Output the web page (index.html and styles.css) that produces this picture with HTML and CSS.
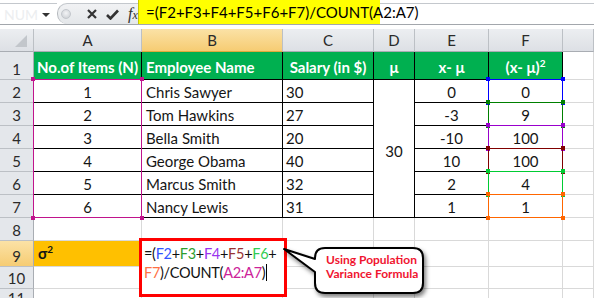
FILE: index.html
```html
<!DOCTYPE html>
<html>
<head>
<meta charset="utf-8">
<link rel="stylesheet" href="styles.css">
</head>
<body>
<div class="app">
  <div class="fbar">
    <div class="namebox"><span class="nb-text">NUM</span><span class="nb-arrow"></span></div>
    <div class="ctrls">
      <span class="knob"></span>
      <svg class="ic-x" width="10" height="10" viewBox="0 0 10 10"><path d="M1 1 L9 9 M9 1 L1 9" stroke="#333" stroke-width="2.2"/></svg>
      <svg class="ic-ok" width="13" height="11" viewBox="0 0 13 11"><path d="M1 6 L4.5 9.5 L12 1.5" fill="none" stroke="#333" stroke-width="2.6"/></svg>
      <span class="fx">f<span class="fx-x">x</span></span>
    </div>
    <div class="formula"><span class="hl">=(F2+F3+F4+F5+F6+F7)/COUNT(A2:A7)</span></div>
  </div>
  <div class="gap"></div>
  <div class="sheet">
    <!-- header row -->
    <div class="ch corner"><span class="tri"></span></div>
    <div class="ch">A</div>
    <div class="ch act">B</div>
    <div class="ch">C</div>
    <div class="ch">D</div>
    <div class="ch">E</div>
    <div class="ch">F</div>
    <div class="ch"></div>

    <!-- row 1 -->
    <div class="rh">1</div>
    <div class="t hd c">No.of Items (N)</div>
    <div class="t hd l">Employee Name</div>
    <div class="t hd c">Salary (in $)</div>
    <div class="t hd c">μ</div>
    <div class="t hd c">x- μ</div>
    <div class="t hd c"><span>(x- μ)<sup>2</sup></span></div>
    <div class="e"></div>

    <!-- row 2 -->
    <div class="rh">2</div>
    <div class="t c">1</div>
    <div class="t l">Chris Sawyer</div>
    <div class="t l2">30</div>
    <div class="t c mid merged">30</div>
    <div class="t c">0</div>
    <div class="t c">0</div>
    <div class="e"></div>

    <!-- row 3 -->
    <div class="rh">3</div>
    <div class="t c">2</div>
    <div class="t l">Tom Hawkins</div>
    <div class="t l2">27</div>
    <div class="t c">-3</div>
    <div class="t c">9</div>
    <div class="e"></div>

    <!-- row 4 -->
    <div class="rh">4</div>
    <div class="t c">3</div>
    <div class="t l">Bella Smith</div>
    <div class="t l2">20</div>
    <div class="t c">-10</div>
    <div class="t c">100</div>
    <div class="e"></div>

    <!-- row 5 -->
    <div class="rh">5</div>
    <div class="t c">4</div>
    <div class="t l">George Obama</div>
    <div class="t l2">40</div>
    <div class="t c">10</div>
    <div class="t c">100</div>
    <div class="e"></div>

    <!-- row 6 -->
    <div class="rh">6</div>
    <div class="t c">5</div>
    <div class="t l">Marcus Smith</div>
    <div class="t l2">32</div>
    <div class="t c">2</div>
    <div class="t c">4</div>
    <div class="e"></div>

    <!-- row 7 -->
    <div class="rh">7</div>
    <div class="t c">6</div>
    <div class="t l">Nancy Lewis</div>
    <div class="t l2">31</div>
    <div class="t c">1</div>
    <div class="t c">1</div>
    <div class="e"></div>

    <!-- row 8 -->
    <div class="rh">8</div>
    <div class="e"></div><div class="e"></div><div class="e"></div><div class="e"></div><div class="e"></div><div class="e"></div><div class="e"></div>

    <!-- row 9 -->
    <div class="rh act">9</div>
    <div class="e sig"><span>σ<sup>2</sup></span></div>
    <div class="e"></div><div class="e"></div><div class="e"></div><div class="e"></div><div class="e"></div><div class="e"></div>

    <!-- row 10 -->
    <div class="rh">10</div>
    <div class="e"></div><div class="e"></div><div class="e"></div><div class="e"></div><div class="e"></div><div class="e"></div><div class="e"></div>

    <!-- row 11 -->
    <div class="rh rh-last">11</div>
    <div class="e"></div><div class="e"></div><div class="e"></div><div class="e"></div><div class="e"></div><div class="e"></div><div class="e"></div>
  </div>

  <!-- range highlights -->
  <div class="rng rng-a"><i class="sq tl"></i><i class="sq tr"></i><i class="sq bl"></i><i class="sq br"></i></div>
  <div class="rng f f2"><i class="sq tl"></i><i class="sq tr"></i><i class="sq bl"></i><i class="sq br"></i></div>
  <div class="rng f f3"><i class="sq tl"></i><i class="sq tr"></i><i class="sq bl"></i><i class="sq br"></i></div>
  <div class="rng f f4"><i class="sq tl"></i><i class="sq tr"></i><i class="sq bl"></i><i class="sq br"></i></div>
  <div class="rng f f5"><i class="sq tl"></i><i class="sq tr"></i><i class="sq bl"></i><i class="sq br"></i></div>
  <div class="rng f f6"><i class="sq tl"></i><i class="sq tr"></i><i class="sq bl"></i><i class="sq br"></i></div>
  <div class="rng f f7"><i class="sq tl"></i><i class="sq tr"></i><i class="sq bl"></i><i class="sq br"></i></div>

  <!-- in-cell edit box -->
  <div class="edit">
    <div class="ln">=(<span class="k2">F2</span>+<span class="k3">F3</span>+<span class="k4">F4</span>+<span class="k5">F5</span>+<span class="k6">F6</span>+</div>
    <div class="ln"><span class="k7">F7</span>)/COUNT(<span class="ka">A2:A7</span>)<span class="caret"></span></div>
  </div>

  <!-- callout -->
  <svg class="callout" width="150" height="56" viewBox="0 0 150 56">
    <path d="M45 4 H133 Q143 4 143 14 V39 Q143 49 133 49 H45 Q35 49 35 39 V28 L4 5 L35 15 V14 Q35 4 45 4 Z" fill="#fff" stroke="#000" stroke-width="2" stroke-linejoin="round"/>
  </svg>
  <div class="callout-text">Using Population<br>Variance Formula</div>
</div>
</body>
</html>
```

FILE: styles.css
```css
* { box-sizing: border-box; margin: 0; padding: 0; }
body {
  margin: 0;
  background: #fff;
  font-family: Lato, "Liberation Sans", sans-serif;
  font-size: 15px;
  color: #151515;
}
.app {
  position: relative;
  width: 594px;
  height: 298px;
  overflow: hidden;
}

/* formula bar */
.fbar {
  display: flex;
  height: 25px;
  border-bottom: 1px solid #a3a7ac;
}
.namebox {
  position: relative;
  width: 57px;
  margin-top: 3px;
  border-top: 1px solid #c4c8cd;
  display: flex;
  align-items: center;
  padding-left: 4px;
  font-size: 14px;
  color: #eceef0;
}
.nb-arrow {
  position: absolute;
  left: 42px;
  top: 9px;
  border-left: 4px solid transparent;
  border-right: 4px solid transparent;
  border-top: 4px solid #333;
}
.ctrls {
  width: 81px;
  margin-top: 3px;
  border-top: 1px solid #c4c8cd;
  border-left: 1px solid #b5b9be;
  border-radius: 10px 0 0 10px;
  background: linear-gradient(#f1f2f4, #e4e7ea);
  display: flex;
  align-items: center;
  padding-left: 3px;
}
.knob {
  width: 10px;
  height: 10px;
  border-radius: 50%;
  background: radial-gradient(circle at 50% 40%, #f3f4f6, #c7cbd0);
  border: 1px solid #c3c7cc;
}
.ic-x { margin-left: 16px; }
.ic-ok { margin-left: 9px; }
.fx {
  margin-left: 9px;
  font-family: "Liberation Serif", serif;
  font-style: italic;
  font-size: 16px;
  color: #333;
  line-height: 1;
}
.fx-x { font-size: 12px; }
.formula {
  flex: 1;
  display: flex;
  border-top: 1px solid #c4c8cd;
  margin-top: 3px;
}
.hl {
  margin-top: -4px;
  height: 24px;
  width: 242px;
  background: #ffff00;
  border-left: 1px solid #c8c800;
  padding-left: 7px;
  line-height: 25px;
  white-space: nowrap;
  color: #000;
}
.gap { height: 4px; }

/* sheet */
.sheet {
  display: grid;
  grid-template-columns: 34px 108px 141px 91px 41px 74px 74px 31px;
  grid-template-rows: 23px 28px repeat(7, 23px) 26px 22px 20px;
}
.ch {
  background: linear-gradient(#eceef1, #dde0e5);
  border-right: 1px solid #bcc0c5;
  border-bottom: 1px solid #a9adb3;
  display: flex;
  align-items: center;
  justify-content: center;
  color: #2a2a2a;
}
.ch.act { background: linear-gradient(#fbe2a6, #f6cc73); border-bottom-color: #e0a93c; }
.corner { position: relative; }
.tri {
  position: absolute;
  right: 6px;
  bottom: 4px;
  width: 0;
  height: 0;
  border-left: 12px solid transparent;
  border-bottom: 12px solid #c2c6cb;
}
.rh {
  background: #e4e7eb;
  border-right: 1px solid #a9adb3;
  border-bottom: 1px solid #bcc0c5;
  display: flex;
  align-items: flex-end;
  justify-content: center;
  padding-bottom: 1px;
  color: #2a2a2a;
}
.rh-last { align-items: flex-start; padding-top: 1px; line-height: 16px; }
.rh.act { background: linear-gradient(#fbe2a6, #f6cc73); }
.t, .e {
  display: flex;
  align-items: flex-end;
  padding-bottom: 1px;
  white-space: nowrap;
}
.t { border-right: 1px solid #000; border-bottom: 1px solid #000; }
.e { border-right: 1px solid #d9d9d9; border-bottom: 1px solid #d9d9d9; }
.c { justify-content: center; }
.l { padding-left: 4px; }
.l2 { padding-left: 3px; }
.hd {
  background: #00b050;
  color: #fff;
  font-weight: bold;
  padding-bottom: 3px;
}
sup { font-size: 10px; vertical-align: 6px; line-height: 0; }
.merged { grid-row: span 6; align-items: center; padding-top: 6px; }
.sig {
  background: #ffc000;
  font-weight: bold;
  padding-left: 4px;
  align-items: center;
}

/* range highlights */
.rng { position: absolute; border: 1px solid; }
.rng-a { left: 33px; top: 79px; width: 109px; height: 139px; border-color: #c0148c; color: #c0148c; }
.f { left: 488px; width: 75px; height: 24px; }
.f2 { top: 79px; color: #0000ff; border-color: #0000ff; }
.f3 { top: 102px; color: #008000; border-color: #008000; }
.f4 { top: 125px; color: #9900cc; border-color: #9900cc; }
.f5 { top: 148px; color: #800000; border-color: #800000; }
.f6 { top: 171px; color: #00cc33; border-color: #00cc33; }
.f7 { top: 194px; color: #ff6600; border-color: #ff6600; }
.sq { position: absolute; width: 4px; height: 4px; background: currentColor; }
.tl { left: -3px; top: -3px; }
.tr { right: -3px; top: -3px; }
.bl { left: -3px; bottom: -3px; }
.br { right: -3px; bottom: -3px; }

/* edit box */
.edit {
  position: absolute;
  left: 139px;
  top: 238px;
  width: 148px;
  height: 59px;
  border: 3px solid #ff0000;
  background: #fff;
  padding: 3px 0 0 2px;
  font-size: 14.5px;
  letter-spacing: -0.3px;
  line-height: 19px;
  color: #111;
}
.ln { white-space: nowrap; }
.k2 { color: #3355ff; }
.k3 { color: #2e9e2e; }
.k4 { color: #9933ee; }
.k5 { color: #993333; }
.k6 { color: #33cc55; }
.k7 { color: #ff7043; }
.ka { color: #cc2299; }
.caret {
  display: inline-block;
  width: 1px;
  height: 17px;
  background: #000;
  vertical-align: -3px;
  margin-left: 1px;
}

/* callout */
.callout {
  position: absolute;
  left: 280px;
  top: 244px;
  filter: drop-shadow(2px 3px 2px rgba(0, 0, 0, 0.5));
}
.callout-text {
  position: absolute;
  left: 326px;
  top: 253px;
  font-size: 12px;
  font-weight: bold;
  line-height: 14px;
  color: #f0142f;
  white-space: nowrap;
}
```
